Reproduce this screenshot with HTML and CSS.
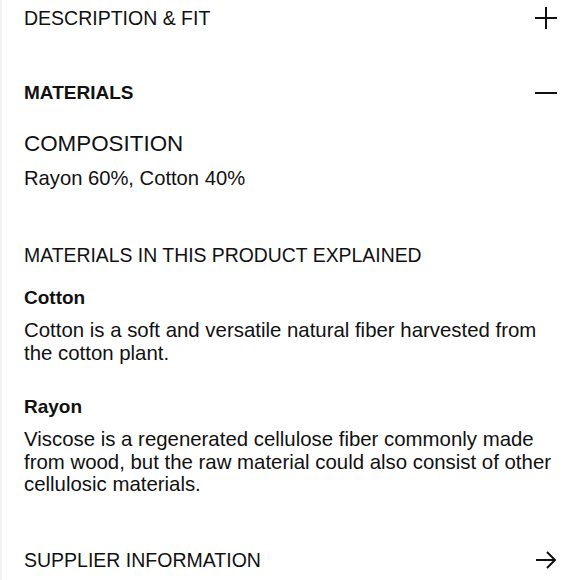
FILE: index.html
```html
<!DOCTYPE html>
<html>
<head>
<meta charset="utf-8">
<link rel="stylesheet" href="styles.css">
</head>
<body>
<div class="page">
  <div class="acc-row row-first">
    <span class="acc-title">DESCRIPTION &amp; FIT</span>
    <svg class="icon" width="22" height="22" viewBox="0 0 22 22"><path d="M11 0V22M0 11H22" stroke="#111" stroke-width="2" fill="none"/></svg>
  </div>
  <div class="acc-row row-open">
    <span class="acc-title bold">MATERIALS</span>
    <svg class="icon" width="22" height="22" viewBox="0 0 22 22"><path d="M0 11H22" stroke="#111" stroke-width="2" fill="none"/></svg>
  </div>
  <div class="content">
    <h2 class="comp-title">COMPOSITION</h2>
    <p class="comp-text">Rayon 60%, Cotton 40%</p>
    <h3 class="explained">MATERIALS IN THIS PRODUCT EXPLAINED</h3>
    <div class="material">
      <h4 class="mat-name">Cotton</h4>
      <p class="mat-text">Cotton is a soft and versatile natural fiber harvested from the cotton plant.</p>
    </div>
    <div class="material">
      <h4 class="mat-name">Rayon</h4>
      <p class="mat-text">Viscose is a regenerated cellulose fiber commonly made from wood, but the raw material could also consist of other cellulosic materials.</p>
    </div>
  </div>
  <div class="acc-row row-supplier">
    <span class="acc-title">SUPPLIER INFORMATION</span>
    <svg class="icon" width="22" height="22" viewBox="0 0 22 22"><path d="M1 11H20M12 3L20 11L12 19" stroke="#111" stroke-width="2" fill="none"/></svg>
  </div>
</div>
</body>
</html>
```

FILE: styles.css
```css
html, body {
  margin: 0;
  padding: 0;
  background: #ffffff;
}
body {
  font-family: "Liberation Sans", Arial, sans-serif;
  color: #111111;
}
.page {
  width: 580px;
  height: 580px;
  box-sizing: border-box;
  padding: 0 23px 0 22px;
  border-left: 2px solid #f4f4f4;
  display: flex;
  flex-direction: column;
  overflow: hidden;
}
.acc-row {
  display: flex;
  justify-content: space-between;
  align-items: center;
  height: 24px;
  flex-shrink: 0;
}
.acc-title {
  font-size: 19.5px;
  line-height: 24px;
}
.bold { font-weight: bold; font-size: 19px; }
.icon { display: block; }
.row-first { margin-top: 6px; }
.row-open { margin-top: 51px; }
.content { margin-top: 25px; }
.comp-title {
  margin: 0;
  font-weight: normal;
  font-size: 22.4px;
  line-height: 28px;
}
.comp-text {
  margin: 9px 0 0 0;
  font-size: 20.2px;
  line-height: 23px;
}
.explained {
  margin: 53px 0 0 0;
  font-weight: normal;
  font-size: 19.4px;
  line-height: 24px;
}
.material { margin-top: 20px; }
.material + .material { margin-top: 32px; }
.mat-name {
  margin: 0;
  font-weight: bold;
  font-size: 19px;
  line-height: 22px;
}
.mat-text {
  margin: 10px 0 0 0;
  font-size: 20.4px;
  line-height: 22.5px;
}
.row-supplier { margin-top: 52px; }
```
